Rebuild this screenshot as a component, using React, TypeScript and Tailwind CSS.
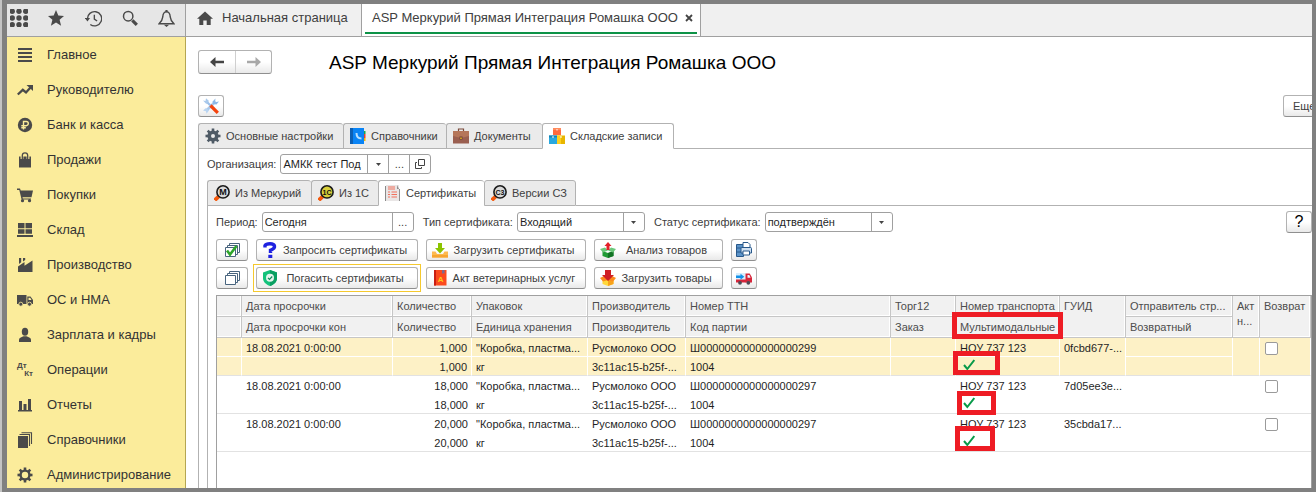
import type { ReactNode } from "react";
import clsx from "clsx";

/* ---------- icons ---------- */

function Svg({ size = 16, children }: { size?: number; children: ReactNode }) {
  return (
    <svg width={size} height={size} viewBox="0 0 16 16" fill="#4a4a4a" className="shrink-0" aria-hidden="true">
      {children}
    </svg>
  );
}

const AppsIcon = () => (
  <Svg size={18}>
    {[0, 6, 12].map((y) => [0, 6, 12].map((x) => <circle key={`${x}-${y}`} cx={x + 2} cy={y + 2} r="2.4" />))}
  </Svg>
);

const StarIcon = () => (
  <Svg>
    <path d="M8 0l2.300 5.600 5.700.4-4.400 3.700 1.500 6.100L8 12.500l-5.100 3.300 1.500-6.100L0 6l5.700-.4z" />
  </Svg>
);

const HistoryIcon = () => (
  <Svg size={17}>
    <path d="M2.300 8.500A6.700 6.700 0 1 1 5 13.600" fill="none" stroke="#4a4a4a" strokeWidth="1.300" />
    <path d="M-.2 7.500h5L2.300 10.800z" />
    <path d="M8.800 4.500v4l2.600 1.900" fill="none" stroke="#4a4a4a" strokeWidth="1.300" />
  </Svg>
);

const SearchIcon = () => (
  <Svg>
    <circle cx="6.200" cy="6.200" r="4.700" fill="none" stroke="#4a4a4a" strokeWidth="1.500" />
    <path d="M10.300 10.300l4.500 4.500" stroke="#4a4a4a" strokeWidth="3.200" />
  </Svg>
);

const BellIcon = () => (
  <Svg size={17}>
    <path
      d="M8 1.500C5.300 1.800 4.600 4 4.500 6.500 4.300 9.300 3.500 10.500 1 13h14c-2.500-2.500-3.300-3.700-3.500-6.500C11.400 4 10.700 1.800 8 1.500z"
      fill="none"
      stroke="#4a4a4a"
      strokeWidth="1.300"
    />
    <path d="M7 0h2v2H7zM5.500 13.800h5L8 16z" />
  </Svg>
);

const HomeIcon = () => (
  <Svg>
    <path d="M8 1.500l8 7.300h-2.300V15H9.700v-4.500H6.300V15H2.300V8.800H0z" />
  </Svg>
);

const MenuLinesIcon = () => (
  <Svg>
    <path d="M1 1h14v2H1zM1 5h14v2H1zM1 9h14v2H1zM1 13h14v2H1z" />
  </Svg>
);

const TrendIcon = () => (
  <Svg>
    <path d="M.8 12.500L5.800 7.800l3.200 2.700 4.500-5" fill="none" stroke="#4a4a4a" strokeWidth="2.300" />
    <path d="M9.500 3H16v6z" />
  </Svg>
);

const RubleIcon = () => (
  <Svg>
    <circle cx="8" cy="8" r="7.200" />
    <path d="M6.500 12.500V4.500h2.700a2 2 0 0 1 0 4.200H4.300M4.300 10.700h4.500" fill="none" stroke="#fbec9b" strokeWidth="1.400" />
  </Svg>
);

const BagIcon = () => (
  <Svg>
    <path d="M2 4.500h12V15.500H2z" />
    <path d="M5 7V3.500a3 3 0 0 1 6 0V7" fill="none" stroke="#fbec9b" strokeWidth="2.800" />
    <path d="M5.300 7V3.500a2.700 2.700 0 0 1 5.400 0V7" fill="none" stroke="#4a4a4a" strokeWidth="1.300" />
  </Svg>
);

const CartIcon = () => (
  <Svg>
    <path d="M0 1.500h3l.7 2H16l-1.500 6.700H5.500l.3 1.200H14v1.100H4.600L2.300 2.900H0z" />
    <circle cx="5.500" cy="13.700" r="1.600" />
    <circle cx="12.500" cy="13.700" r="1.600" />
  </Svg>
);

const StockIcon = () => (
  <Svg>
    <path d="M1 1h6.500v5.300H1zM8.500 1H15v5.300H8.500zM1 7.300h6.500v4.500H1zM8.500 7.300H15v4.500H8.500zM0 13h16v2H0z" />
  </Svg>
);

const FactoryIcon = () => (
  <Svg>
    <path d="M1 15V9.500L7.500 5v3.800L15.500 3.500V15z" />
    <path d="M2 1h2.200v4.300L2 7zM6 1h2.200v2L6 4.500z" />
  </Svg>
);

const TruckIcon = () => (
  <Svg>
    <path d="M0 3h9.500v9H0zM10.300 4.500h3.200L16 8v4h-5.700z" />
    <path d="M11.500 5.700h1.700L14.500 8h-3z" fill="#fbec9b" />
    <circle cx="3.800" cy="12.200" r="2" stroke="#fbec9b" strokeWidth=".8" />
    <circle cx="12.500" cy="12.200" r="2" stroke="#fbec9b" strokeWidth=".8" />
  </Svg>
);

const PersonIcon = () => (
  <Svg>
    <ellipse cx="8" cy="4.700" rx="3.200" ry="4" />
    <path d="M2 15v-2.500c0-1.500 2-2.500 4.500-3.300h3c2.500.8 4.500 1.800 4.500 3.300V15z" />
  </Svg>
);

const DebitIcon = () => (
  <span aria-hidden="true" className="flex w-4 shrink-0 flex-col text-[8px] font-bold leading-[8px] text-[#4a4a4a]">
    <span>Дт</span>
    <span className="text-right">Кт</span>
  </span>
);

const ChartIcon = () => (
  <Svg>
    <path d="M2 4h3v9H2zM6.500 7h3v6h-3zM11 2h3v11h-3zM1 13h14v1.500H1z" />
  </Svg>
);

const BooksIcon = () => (
  <Svg>
    <path d="M1 4h10v12H1z" />
    <path d="M2.500 2.500h10V14M4.500.7h10V12" fill="none" stroke="#4a4a4a" strokeWidth="1.100" />
  </Svg>
);

const TEETH = [0, 45, 90, 135, 180, 225, 270, 315];

function GearIcon({ color = "#4a4a4a", hole = 3.2 }: { color?: string; hole?: number }) {
  return (
    <Svg>
      <circle cx="8" cy="8" r={(hole + 5.6) / 2} fill="none" stroke={color} strokeWidth={5.6 - hole} />
      {TEETH.map((a) => (
        <rect key={a} x="6.700" y="0.500" width="2.600" height="3" fill={color} transform={`rotate(${a} 8 8)`} />
      ))}
    </Svg>
  );
}

const ToolsIcon = () => (
  <Svg>
    <path d="M3 13L12 4" stroke="#a9c9ec" strokeWidth="2.600" />
    <path d="M9.500 3.500L12.500.5l-.3 2.800 1 .8L16 3.500 13.500 6.500 10 6z" fill="#8db8e6" />
    <path d="M0 12.500l3-2.500 3 2.500-2.500 3.300-.5-2.600z" fill="#b9d4f1" />
    <path d="M3 3l5.500 5.500" stroke="#9cc0ea" strokeWidth="2.200" />
    <path d="M0 2.500L2.500 3 3 .3 6 3 3.300 6z" fill="#a9c9ec" />
    <path d="M7.500 7.500l7.300 7.300" stroke="#f4430d" strokeWidth="3.200" />
  </Svg>
);

const PhoneBookIcon = () => (
  <Svg>
    <path d="M12 3h3.500v3H12z" fill="#19a84a" />
    <path d="M12 6h3.500v4H12z" fill="#e8402f" />
    <path d="M12 10h3.500v3H12z" fill="#f4b400" />
    <path d="M0 0h14v16H0z" fill="#0a84f5" />
    <path d="M0 0h3v16H0z" fill="#0b5fb5" />
    <path d="M6.500 5c0 4 1.500 5.500 5 5.500" fill="none" stroke="#b8e0ff" strokeWidth="2" />
  </Svg>
);

const BriefcaseIcon = () => (
  <Svg>
    <path d="M5.500 3V1h5v2" fill="none" stroke="#7b4a3a" strokeWidth="1.200" />
    <path d="M0 3h16v12.500H0z" fill="#9a5f50" />
    <path d="M0 3h16v5l-8 2-8-2z" fill="#b5765a" />
    <path d="M6.500 8.500h3v3h-3z" fill="#6d4033" />
    <path d="M7.300 9.500h1.400v1.400H7.300z" fill="#f5c518" />
  </Svg>
);

const BoxesIcon = () => (
  <Svg>
    <path d="M4 0h8v7H4z" fill="#ff6a3d" />
    <path d="M4 0h8v2H4z" fill="#ff8a5c" />
    <path d="M0 7.500h8V16H0z" fill="#29a8df" />
    <path d="M0 7.500h8v2H0z" fill="#1684b3" />
    <path d="M8 7.500h8V16H8z" fill="#e8b600" />
    <path d="M8 7.500h4V16H8z" fill="#ffcf1f" />
    <path d="M3 8h2v2H3zM7 1h2v1.500H7zM11 8h2v2h-2z" fill="#fff" opacity=".5" />
  </Svg>
);

function LensIcon({ label, fill = "#d8d8d8" }: { label: string; fill?: string }) {
  return (
    <Svg>
      <path d="M.8 15.200l4-3.800" stroke="#f4590d" strokeWidth="3.800" />
      <circle cx="9" cy="6.900" r="6.100" fill={fill} stroke="#1b1b1b" strokeWidth="1.600" />
      <text x="9" y="9.900" textAnchor="middle" fontSize={label.length > 1 ? 7 : 9} fontWeight="700" fill="#111">
        {label}
      </text>
    </Svg>
  );
}

const CertIcon = () => (
  <Svg>
    <path d="M1 0h13v16H1z" fill="#e9e6e6" />
    <path d="M12 0v4h3v12h-1V4z" fill="#8f8f8f" />
    <path d="M3 2h7M3 4h7M3 7h2M6.500 7H12M3 9.500h2M6.500 9.500H12M3 12h2M6.500 12H12" stroke="#f2705c" strokeWidth="1.200" />
    <path d="M.5 1v15" stroke="#8a8a8a" />
  </Svg>
);

const CopiesIcon = ({ checked = false }: { checked?: boolean }) => (
  <Svg>
    <g fill="#fff" stroke="#48647e" strokeWidth="1">
      <path d="M5.500 1.500h10v9h-10z" />
      <path d="M3.500 3.500h10v9h-10z" />
      <path d="M1.500 5.500h10v9h-10z" />
    </g>
    {checked && <path d="M3 8.500l3 4 6.500-8.500" fill="none" stroke="#2ea52c" strokeWidth="2.600" />}
  </Svg>
);

const QuestionIcon = () => (
  <Svg>
    <path d="M3 5.500V3.500Q4 1.800 8 1.800t4.500 2.400T8.500 8.300V11" fill="none" stroke="#1f22e0" strokeWidth="3.400" />
    <path d="M6.300 12.800h4V16h-4z" fill="#1f22e0" />
  </Svg>
);

const DownloadIcon = () => (
  <Svg>
    <path d="M0 9.500h3.500L5 12h6l1.500-2.500H16V15.500H0z" fill="#fdb94e" />
    <path d="M0 13h16v2.500H0z" fill="#f7a531" />
    <path d="M6 1h4v5h3L8 11.500 3 6h3z" fill="#8bc400" />
  </Svg>
);

const BoxUpIcon = () => (
  <Svg>
    <path d="M2.500 9L8 11l5.500-2v5L8 16l-5.500-2z" fill="#1f9a34" />
    <path d="M8 11l5.500-2v5L8 16z" fill="#137325" />
    <path d="M0 7l5-1.500 3 3L3 10.500zM16 7l-5-1.500-3 3 5 2z" fill="#6cc77b" />
    <path d="M8 0l3.500 4h-2v4h-3V4h-2z" fill="#e3202a" />
  </Svg>
);

const PrinterIcon = () => (
  <Svg>
    <path d="M.5 2.500h7v12h-7z" fill="#5b93c9" stroke="#28588a" />
    <path d="M1 6h6M1 10h6" stroke="#28588a" />
    <path d="M7 .5h5l2 2V6H7z" fill="#fff" stroke="#28588a" />
    <path d="M5 6.500q0-1 1-1h8.500q1 0 1 1V11H5z" fill="#cfe0f1" stroke="#28588a" />
    <path d="M7 9h6.500v4H7z" fill="#fff" stroke="#28588a" />
  </Svg>
);

const ShieldIcon = () => (
  <Svg>
    <path d="M8 0l7 2.500V8c0 4-3 6.500-7 8-4-1.500-7-4-7-8V2.500z" fill="#13c27b" />
    <path d="M8 0l7 2.500V8c0 4-3 6.500-7 8z" fill="#0a9f62" />
    <circle cx="8" cy="7.800" r="4" fill="#e4f5ee" />
    <path d="M6 7.800l1.500 1.600L10.200 6.500" fill="none" stroke="#0f8a58" strokeWidth="1.200" />
  </Svg>
);

const RedBookIcon = () => (
  <Svg>
    <path d="M2 0h12.500v15.500H2z" fill="#fb4a1e" />
    <path d="M2 0h2v15.500H2z" fill="#c91f12" />
    <path d="M10 0h2.500v4L11.200 3 10 4z" fill="#7d6a8f" />
    <text x="8.700" y="12" textAnchor="middle" fontSize="8" fontWeight="700" fill="#ffc61a">
      A
    </text>
  </Svg>
);

const BoxDownIcon = () => (
  <Svg>
    <path d="M2.500 9h11v5L8 16l-5.500-2z" fill="#ffd83a" />
    <path d="M8 10l5.500-1v5L8 16z" fill="#f7a21b" />
    <path d="M0 8l4-2 4 4-5 1.500zM16 8l-4-2-4 4 5 1.500z" fill="#fb8c1e" />
    <path d="M5 0h6v5h3L8 11 2 5h3z" fill="#cf1f24" />
  </Svg>
);

const RedTruckIcon = () => (
  <Svg>
    <path d="M0 3h9.500v8.500H0z" fill="#d9eefc" />
    <path d="M0 9.500h10v3H0z" fill="#d6263b" />
    <path d="M9.500 3.500h4.200L16 7.500v5H9.500z" fill="#d6263b" />
    <path d="M11.500 5h1.800l1.300 2.700h-3.100z" fill="#e9f5fd" />
    <path d="M0 5.500h4.500V3.700L8.300 6.800 4.500 9.800V8H0z" fill="#1391e8" />
    <circle cx="4" cy="12.800" r="1.900" fill="#4b4b55" />
    <circle cx="12.300" cy="12.800" r="1.900" fill="#4b4b55" />
  </Svg>
);

const TickIcon = () => (
  <svg width="12" height="12" viewBox="0 0 12 12" aria-hidden="true">
    <path d="M1 6l3.300 4L11.300 1" fill="none" stroke="#089a49" strokeWidth="2" />
  </svg>
);

function ArrowIcon({ flip, color }: { flip?: boolean; color: string }) {
  return (
    <svg width="14" height="10" viewBox="0 0 14 10" className={clsx(flip && "rotate-180")} aria-hidden="true">
      <path d="M0 5l5.500-5v3.800H14v2.400H5.500V10z" fill={color} />
    </svg>
  );
}

const CaretIcon = () => (
  <svg width="5" height="3" viewBox="0 0 5 3" aria-hidden="true">
    <path d="M0 0h5L2.500 3z" fill="#444" />
  </svg>
);

const OpenIcon = () => (
  <svg width="10" height="10" viewBox="0 0 10 10" fill="none" stroke="#444" aria-hidden="true">
    <path d="M3.500.5h6v6h-6zM2 3.500H.5v6h6V8" />
  </svg>
);

/* ---------- data ---------- */

const SECTIONS = [
  { label: "Главное", icon: <MenuLinesIcon /> },
  { label: "Руководителю", icon: <TrendIcon /> },
  { label: "Банк и касса", icon: <RubleIcon /> },
  { label: "Продажи", icon: <BagIcon /> },
  { label: "Покупки", icon: <CartIcon /> },
  { label: "Склад", icon: <StockIcon /> },
  { label: "Производство", icon: <FactoryIcon /> },
  { label: "ОС и НМА", icon: <TruckIcon /> },
  { label: "Зарплата и кадры", icon: <PersonIcon /> },
  { label: "Операции", icon: <DebitIcon /> },
  { label: "Отчеты", icon: <ChartIcon /> },
  { label: "Справочники", icon: <BooksIcon /> },
  { label: "Администрирование", icon: <GearIcon /> },
];

const QUICK = [
  { label: "Меню", icon: <AppsIcon /> },
  { label: "Избранное", icon: <StarIcon /> },
  { label: "История", icon: <HistoryIcon /> },
  { label: "Поиск", icon: <SearchIcon /> },
  { label: "Оповещения", icon: <BellIcon /> },
];

interface TabDef {
  label: string;
  icon: ReactNode;
  width: string;
  active?: boolean;
}

const MAIN_TABS: TabDef[] = [
  { label: "Основные настройки", icon: <GearIcon color="#4f5b66" hole={2} />, width: "w-[145px]" },
  { label: "Справочники", icon: <PhoneBookIcon />, width: "w-[103px]" },
  { label: "Документы", icon: <BriefcaseIcon />, width: "w-[96px]" },
  { label: "Складские записи", icon: <BoxesIcon />, width: "w-[132px]", active: true },
];

const INNER_TABS: TabDef[] = [
  { label: "Из Меркурий", icon: <LensIcon label="M" />, width: "w-[104px]" },
  { label: "Из 1С", icon: <LensIcon label="1C" fill="#d8cf3a" />, width: "w-[67px]" },
  { label: "Сертификаты", icon: <CertIcon />, width: "w-[106px]", active: true },
  { label: "Версии СЗ", icon: <LensIcon label="C3" />, width: "w-[92px]" },
];

const COLUMNS = [
  "w-[25px]",
  "w-[151px]",
  "w-[79px]",
  "w-[116px]",
  "w-[98px]",
  "",
  "w-[65px]",
  "w-[104px]",
  "w-[66px]",
  "w-[107px]",
  "w-[27px]",
  "w-[51px]",
];

const ROWS = [
  { qty: "1,000", ttn: "Ш0000000000000000299", guid: "0fcbd677-...", selected: true, mark: "-left-[3px] -top-[6px] w-[47px] h-6" },
  { qty: "18,000", ttn: "Ш0000000000000000297", guid: "7d05ee3e...", mark: "left-px -top-1 w-[39px] h-6" },
  { qty: "20,000", ttn: "Ш0000000000000000297", guid: "35cbda17...", mark: "-left-px -top-[7px] w-10 h-[25px]" },
];

/* ---------- controls ---------- */

const BUTTON =
  "flex h-[22px] shrink-0 items-center rounded-[3px] border border-[#b2b2b2] border-b-[#8f8f8f] bg-linear-to-b from-white via-white to-[#e9e9e9]";

interface ActionProps {
  icon: ReactNode;
  label: string;
  width: string;
  iconOnly?: boolean;
  focused?: boolean;
}

function Action({ icon, label, width, iconOnly, focused }: ActionProps) {
  const button = (
    <button type="button" aria-label={label} className={clsx(BUTTON, width, iconOnly ? "justify-center" : "px-[5px]")}>
      {icon}
      {!iconOnly && <span className="flex-1 whitespace-nowrap text-center">{label}</span>}
    </button>
  );
  if (!focused) return button;
  return (
    <div className="relative shrink-0">
      {button}
      <span aria-hidden="true" className="pointer-events-none absolute -inset-[3px] border border-[#f5c92e]" />
    </div>
  );
}

function TabStrip({ tabs }: { tabs: TabDef[] }) {
  return (
    <div role="tablist" className="flex h-[26px]">
      {tabs.map((t) => (
        <button
          key={t.label}
          type="button"
          role="tab"
          aria-selected={!!t.active}
          className={clsx(
            "flex shrink-0 items-center gap-[5px] whitespace-nowrap rounded-t-[3px] border-l border-t border-b border-[#b2b2b2] pl-[6px] last-of-type:border-r",
            t.width,
            t.active ? "border-b-white bg-white" : "bg-[#ebebeb]",
          )}
        >
          {t.icon}
          {t.label}
        </button>
      ))}
      <div className="flex-1 border-b border-[#b2b2b2]" />
    </div>
  );
}

interface FieldProps {
  id: string;
  label: string;
  value: string;
  width: string;
  buttons: ("list" | "dots" | "open")[];
}

const FIELD_BUTTONS = {
  list: { label: "Выбрать из списка", icon: <CaretIcon /> },
  dots: { label: "Показать все", icon: "..." },
  open: { label: "Открыть", icon: <OpenIcon /> },
};

function Field({ id, label, value, width, buttons }: FieldProps) {
  return (
    <div className="flex items-center gap-1">
      <label htmlFor={id} className="whitespace-nowrap">
        {label}
      </label>
      <div className="flex h-5 overflow-hidden rounded-[3px] border border-[#a0a0a0] bg-white">
        <input id={id} defaultValue={value} className={clsx("px-0.5 text-[#1f1f1f] outline-none", width)} />
        {buttons.map((b) => (
          <button
            key={b}
            type="button"
            aria-label={FIELD_BUTTONS[b].label}
            className="flex w-[21px] items-center justify-center border-l border-[#a0a0a0]"
          >
            {FIELD_BUTTONS[b].icon}
          </button>
        ))}
      </div>
    </div>
  );
}

/* ---------- table ---------- */

function Head({ children, rowSpan }: { children?: ReactNode; rowSpan?: number }) {
  return (
    <th
      rowSpan={rowSpan}
      className="relative h-[21px] whitespace-nowrap border-b border-r border-[#c6c6c6] bg-[#f1f1f1] px-1 text-left align-top font-normal leading-5 text-[#4d4d4d] shadow-[inset_-1px_-1px_0_#fff]"
    >
      {children}
    </th>
  );
}

function Mark({ place }: { place: string }) {
  return <span aria-hidden="true" className={clsx("pointer-events-none absolute z-10 border-[5px] border-[#ee1c24]", place)} />;
}

function CertificateTable() {
  return (
    <table className="w-full table-fixed border-separate border-spacing-0">
      <colgroup>
        {COLUMNS.map((w, i) => (
          <col key={i} className={w} />
        ))}
      </colgroup>
      <thead>
        <tr>
          <Head />
          <Head>Дата просрочки</Head>
          <Head>Количество</Head>
          <Head>Упаковок</Head>
          <Head>Производитель</Head>
          <Head>Номер ТТН</Head>
          <Head>Торг12</Head>
          <Head>Номер транспорта</Head>
          <Head rowSpan={2}>ГУИД</Head>
          <Head>Отправитель стр...</Head>
          <Head rowSpan={2}>
            <span className="block pt-[3px] leading-[15px]">
              Акт
              <br />
              н...
            </span>
          </Head>
          <Head rowSpan={2}>Возврат</Head>
        </tr>
        <tr>
          <Head />
          <Head>Дата просрочки кон</Head>
          <Head>Количество</Head>
          <Head>Единица хранения</Head>
          <Head>Производитель</Head>
          <Head>Код партии</Head>
          <Head>Заказ</Head>
          <Head>
            Мультимодальные
            <Mark place="-left-1 -top-[5px] w-[111px] h-[27px]" />
          </Head>
          <Head>Возвратный</Head>
        </tr>
      </thead>
      {ROWS.map((r) => {
        const base = clsx(
          "relative h-[19px] whitespace-nowrap px-1 pt-0.5 align-top leading-4",
          r.selected && "border-r border-white bg-[#fdf1c6]",
        );
        const top = clsx(base, r.selected && "border-b");
        const bottom = clsx(base, "border-b border-b-[#e2e2e2]");
        return (
          <tbody key={r.guid} className="text-[#1f1f1f]">
            <tr>
              <td className={top} />
              <td className={top}>18.08.2021 0:00:00</td>
              <td className={clsx(top, "text-right")}>{r.qty}</td>
              <td className={top}>"Коробка, пластма...</td>
              <td className={top}>Русмолоко ООО</td>
              <td className={top}>{r.ttn}</td>
              <td className={top} />
              <td className={top}>НОУ 737 123</td>
              <td rowSpan={2} className={bottom}>
                {r.guid}
              </td>
              <td className={top} />
              <td rowSpan={2} className={bottom} />
              <td rowSpan={2} className={bottom}>
                <input
                  type="checkbox"
                  aria-label="Возврат"
                  className="mt-0.5 ml-px block size-[13px] appearance-none rounded-[2px] border border-[#9a9a9a] bg-white"
                />
              </td>
            </tr>
            <tr>
              <td className={bottom} />
              <td className={bottom} />
              <td className={clsx(bottom, "text-right")}>{r.qty}</td>
              <td className={bottom}>кг</td>
              <td className={bottom}>3c11ac15-b25f-...</td>
              <td className={bottom}>1004</td>
              <td className={bottom} />
              <td className={bottom}>
                <span className="flex pl-[3px]">
                  <TickIcon />
                </span>
                <Mark place={r.mark} />
              </td>
              <td className={bottom} />
            </tr>
          </tbody>
        );
      })}
    </table>
  );
}

/* ---------- page ---------- */

export default function App() {
  return (
    <div className="flex h-screen overflow-hidden bg-[#808080] pr-1 font-['Liberation_Sans',Arial,sans-serif] text-[11px] text-[#404040]">
      <div className="mr-[5px] w-0.5 shrink-0 bg-[#c4c4c4]" />
      <div className="my-1 flex min-w-0 flex-1 flex-col bg-white">
        <header className="flex h-[33px] shrink-0 bg-[#f0f0f0] text-[13px]">
          <nav className="flex w-[179px] shrink-0 items-center justify-between border-b border-r border-[#a0a0a0] bg-[#e6e6e6] pb-1 pl-[3px] pr-2.5">
            {QUICK.map((q) => (
              <button key={q.label} type="button" aria-label={q.label}>
                {q.icon}
              </button>
            ))}
          </nav>
          <a href="#home" className="flex w-[175px] shrink-0 items-center gap-[9px] whitespace-nowrap border-b border-[#a0a0a0] pb-1 pl-[11px]">
            <HomeIcon />
            Начальная страница
          </a>
          <div className="flex shrink-0 border-x border-b border-[#a0a0a0] bg-white px-[3px] pb-0.5">
            <div className="flex w-[332px] items-center justify-between border-b-2 border-[#0d9347] pl-[7px] pr-1">
              <a href="#mercury" className="whitespace-nowrap">
                ASP Меркурий Прямая Интеграция Ромашка ООО
              </a>
              <button type="button" aria-label="Закрыть">
                <svg width="8" height="8" viewBox="0 0 8 8" aria-hidden="true">
                  <path d="M1 1l6 6M7 1L1 7" stroke="#444" strokeWidth="1.800" />
                </svg>
              </button>
            </div>
          </div>
          <div className="flex-1 border-b border-[#a0a0a0]" />
        </header>

        <div className="flex min-h-0 flex-1">
          <nav className="w-[179px] shrink-0 overflow-hidden border-r border-[#b5a652] bg-[#fbec9b] text-[13px] text-[#333]">
            {SECTIONS.map((s) => (
              <a key={s.label} href="#section" className="flex h-[35px] items-center gap-3.5 whitespace-nowrap pl-[10px]">
                {s.icon}
                {s.label}
              </a>
            ))}
          </nav>

          <main className="flex min-w-0 flex-1 flex-col overflow-hidden pl-3 pt-3">
            <div className="flex items-center gap-[57px]">
              <div className="flex h-6 rounded-[3px] border border-[#b2b2b2] border-b-[#8f8f8f] bg-linear-to-b from-white via-white to-[#e9e9e9]">
                <button type="button" aria-label="Назад" className="flex w-9 items-center justify-center">
                  <ArrowIcon color="#444" />
                </button>
                <button type="button" aria-label="Вперед" className="flex w-9 items-center justify-center border-l border-[#cfcfcf]">
                  <ArrowIcon flip color="#a8a8a8" />
                </button>
              </div>
              <h1 className="whitespace-nowrap pt-0.5 text-[19px] leading-6 text-black">ASP Меркурий Прямая Интеграция Ромашка ООО</h1>
            </div>

            <div className="mt-5 flex justify-between">
              <Action icon={<ToolsIcon />} label="Настройка" width="w-[26px]" iconOnly />
              <button type="button" className={clsx(BUTTON, "-mr-[11px] w-10 pl-[9px]")}>
                Еще
              </button>
            </div>

            <div className="mt-[6px]">
              <TabStrip tabs={MAIN_TABS} />
            </div>
            <section className="flex min-h-0 flex-1 flex-col border-l border-[#b2b2b2] pl-2 pt-[5px]">
              <Field id="org" label="Организация:" value="АМКК тест Под" width="w-[86px]" buttons={["list", "dots", "open"]} />
              <div className="mt-[6px]">
                <TabStrip tabs={INNER_TABS} />
              </div>
              <section className="flex min-h-0 flex-1 flex-col border-l border-[#b2b2b2] pl-2 pt-[5px]">
                <div className="flex items-center gap-[9px]">
                  <Field id="period" label="Период:" value="Сегодня" width="w-[129px]" buttons={["dots"]} />
                  <Field id="type" label="Тип сертификата:" value="Входящий" width="w-[105px]" buttons={["list"]} />
                  <Field id="status" label="Статус сертификата:" value="подтверждён" width="w-[105px]" buttons={["list"]} />
                  <button type="button" className={clsx(BUTTON, "ml-auto w-[26px] justify-center text-base text-black")}>
                    ?
                  </button>
                </div>
                <div className="mt-[6px] flex gap-2">
                  <Action icon={<CopiesIcon checked />} label="Отметить все" width="w-8" iconOnly />
                  <Action icon={<QuestionIcon />} label="Запросить сертификаты" width="w-[162px]" />
                  <Action icon={<DownloadIcon />} label="Загрузить сертификаты" width="w-[160px]" />
                  <Action icon={<BoxUpIcon />} label="Анализ товаров" width="w-[129px]" />
                  <Action icon={<PrinterIcon />} label="Печать" width="w-[26px]" iconOnly />
                </div>
                <div className="mt-[6px] flex gap-2">
                  <Action icon={<CopiesIcon />} label="Снять отметки" width="w-8" iconOnly />
                  <Action icon={<ShieldIcon />} label="Погасить сертификаты" width="w-[162px]" focused />
                  <Action icon={<RedBookIcon />} label="Акт ветеринарных услуг" width="w-[160px]" />
                  <Action icon={<BoxDownIcon />} label="Загрузить товары" width="w-[129px]" />
                  <Action icon={<RedTruckIcon />} label="Транспорт" width="w-[26px]" iconOnly />
                </div>
                <div className="mt-[6px] min-h-0 flex-1 overflow-hidden border-l border-r border-t border-[#a0a0a0]">
                  <CertificateTable />
                </div>
              </section>
            </section>
          </main>
        </div>
      </div>
    </div>
  );
}
